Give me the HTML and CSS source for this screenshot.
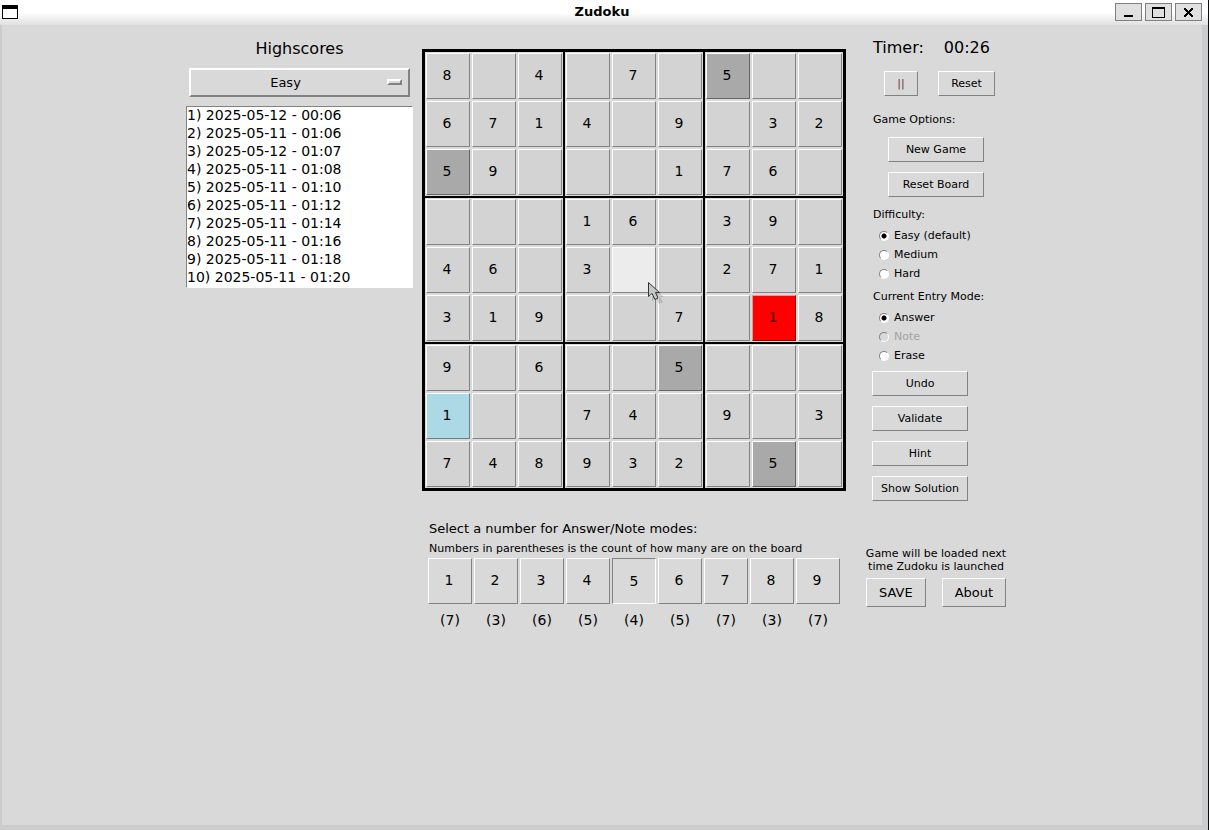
FILE: index.html
```html
<!DOCTYPE html>
<html lang="en">
<head>
<meta charset="utf-8">
<title>Zudoku</title>
<link rel="stylesheet" href="styles.css">
</head>
<body>
<div class="window">
  <header class="titlebar">
    <svg class="app-icon" width="16" height="14" viewBox="0 0 16 14" shape-rendering="crispEdges" aria-hidden="true"><rect width="16" height="14" fill="#000"/><rect x="1" y="4" width="14" height="9" fill="#fff"/></svg>
    <h1 class="title">Zudoku</h1>
    <div class="window-controls">
      <button class="window-btn" type="button" aria-label="Minimize"><svg width="26" height="17" viewBox="0 0 26 17" shape-rendering="crispEdges"><rect x="8" y="11" width="9" height="2"/></svg></button>
      <button class="window-btn" type="button" aria-label="Maximize"><svg width="26" height="17" viewBox="0 0 26 17" shape-rendering="crispEdges"><path d="M6 3h13v11H6zM7 5v8h11V5z" fill-rule="evenodd"/></svg></button>
      <button class="window-btn" type="button" aria-label="Close"><svg width="26" height="17" viewBox="0 0 26 17" shape-rendering="crispEdges"><path d="M8 4h2v1h1v1h1v1h1v-1h1v-1h1v-1h2v2h-1v1h-1v1h-1v1h1v1h1v1h1v2h-2v-1h-1v-1h-1v-1h-1v1h-1v1h-1v1h-2v-2h1v-1h1v-1h1v-1h-1v-1h-1v-1h-1z"/></svg></button>
    </div>
  </header>
  <main class="content">
    <section class="scores">
      <h2 class="heading">Highscores</h2>
      <div class="option-menu">
        <select class="option-select" aria-label="Highscore difficulty"><option>Easy</option><option>Medium</option><option>Hard</option></select>
        <span class="option-mark"></span>
      </div>
      <select class="score-list" size="10" aria-label="Highscores">
        <option>1) 2025-05-12 - 00:06</option>
        <option>2) 2025-05-11 - 01:06</option>
        <option>3) 2025-05-12 - 01:07</option>
        <option>4) 2025-05-11 - 01:08</option>
        <option>5) 2025-05-11 - 01:10</option>
        <option>6) 2025-05-11 - 01:12</option>
        <option>7) 2025-05-11 - 01:14</option>
        <option>8) 2025-05-11 - 01:16</option>
        <option>9) 2025-05-11 - 01:18</option>
        <option>10) 2025-05-11 - 01:20</option>
      </select>
    </section>

    <section class="play">
      <div class="board">
        <div class="box">
          <button class="cell">8</button><button class="cell"></button><button class="cell">4</button>
          <button class="cell">6</button><button class="cell">7</button><button class="cell">1</button>
          <button class="cell match">5</button><button class="cell">9</button><button class="cell"></button>
        </div>
        <div class="box">
          <button class="cell"></button><button class="cell">7</button><button class="cell"></button>
          <button class="cell">4</button><button class="cell"></button><button class="cell">9</button>
          <button class="cell"></button><button class="cell"></button><button class="cell">1</button>
        </div>
        <div class="box">
          <button class="cell match">5</button><button class="cell"></button><button class="cell"></button>
          <button class="cell"></button><button class="cell">3</button><button class="cell">2</button>
          <button class="cell">7</button><button class="cell">6</button><button class="cell"></button>
        </div>
        <div class="box">
          <button class="cell"></button><button class="cell"></button><button class="cell"></button>
          <button class="cell">4</button><button class="cell">6</button><button class="cell"></button>
          <button class="cell">3</button><button class="cell">1</button><button class="cell">9</button>
        </div>
        <div class="box">
          <button class="cell">1</button><button class="cell">6</button><button class="cell"></button>
          <button class="cell">3</button><button class="cell hover"><svg class="pointer" width="18" height="24" viewBox="0 0 18 24" aria-hidden="true"><path d="M5 5v15l4-3 3 6 4-2-3-5h4z" fill="#777" opacity=".3"/><path d="M1.500 1.500v14l3.500-3 3 6 3-1.500-2.500-5.500h4z" fill="#c4c8c8" stroke="#333"/></svg></button><button class="cell"></button>
          <button class="cell"></button><button class="cell"></button><button class="cell">7</button>
        </div>
        <div class="box">
          <button class="cell">3</button><button class="cell">9</button><button class="cell"></button>
          <button class="cell">2</button><button class="cell">7</button><button class="cell">1</button>
          <button class="cell"></button><button class="cell wrong">1</button><button class="cell">8</button>
        </div>
        <div class="box">
          <button class="cell">9</button><button class="cell"></button><button class="cell">6</button>
          <button class="cell hint">1</button><button class="cell"></button><button class="cell"></button>
          <button class="cell">7</button><button class="cell">4</button><button class="cell">8</button>
        </div>
        <div class="box">
          <button class="cell"></button><button class="cell"></button><button class="cell match">5</button>
          <button class="cell">7</button><button class="cell">4</button><button class="cell"></button>
          <button class="cell">9</button><button class="cell">3</button><button class="cell">2</button>
        </div>
        <div class="box">
          <button class="cell"></button><button class="cell"></button><button class="cell"></button>
          <button class="cell">9</button><button class="cell"></button><button class="cell">3</button>
          <button class="cell"></button><button class="cell match">5</button><button class="cell"></button>
        </div>
      </div>

      <div class="picker">
        <p class="picker-title">Select a number for Answer/Note modes:</p>
        <p class="picker-note">Numbers in parentheses is the count of how many are on the board</p>
        <div class="numbers">
          <button class="cell number">1</button><button class="cell number">2</button><button class="cell number">3</button>
          <button class="cell number">4</button><button class="cell number pressed">5</button><button class="cell number">6</button>
          <button class="cell number">7</button><button class="cell number">8</button><button class="cell number">9</button>
          <span class="count">(7)</span><span class="count">(3)</span><span class="count">(6)</span>
          <span class="count">(5)</span><span class="count">(4)</span><span class="count">(5)</span>
          <span class="count">(7)</span><span class="count">(3)</span><span class="count">(7)</span>
        </div>
      </div>
    </section>

    <aside class="side">
      <div class="panel">
        <div class="timer"><span>Timer:</span><span>00:26</span></div>
        <div class="timer-actions">
          <button class="btn pause" aria-label="Pause">||</button>
          <button class="btn reset">Reset</button>
        </div>
        <h3 class="label">Game Options:</h3>
        <div class="actions options">
          <button class="btn wide">New Game</button>
          <button class="btn wide">Reset Board</button>
        </div>
        <fieldset class="group">
          <legend class="label">Difficulty:</legend>
          <label class="choice"><input class="radio" type="radio" name="difficulty" checked>Easy (default)</label>
          <label class="choice"><input class="radio" type="radio" name="difficulty">Medium</label>
          <label class="choice"><input class="radio" type="radio" name="difficulty">Hard</label>
        </fieldset>
        <fieldset class="group">
          <legend class="label">Current Entry Mode:</legend>
          <label class="choice"><input class="radio" type="radio" name="mode" checked>Answer</label>
          <label class="choice disabled"><input class="radio" type="radio" name="mode" disabled>Note</label>
          <label class="choice"><input class="radio" type="radio" name="mode">Erase</label>
        </fieldset>
        <div class="actions">
          <button class="btn wide">Undo</button>
          <button class="btn wide">Validate</button>
          <button class="btn wide">Hint</button>
          <button class="btn wide">Show Solution</button>
        </div>
      </div>
      <div class="save">
        <p class="save-note">Game will be loaded next<br>time Zudoku is launched</p>
        <div class="save-actions">
          <button class="btn large">SAVE</button>
          <button class="btn large">About</button>
        </div>
      </div>
    </aside>
  </main>
</div>
</body>
</html>
```

FILE: styles.css
```css
* { box-sizing: border-box; }

body {
  margin: 0;
  background: #d9d9d9;
  color: #000;
  font: 13px/18px "DejaVu Sans", sans-serif;
}

h1, h2, h3, p { margin: 0; font-weight: normal; }

button, select {
  margin: 0;
  padding: 0;
  border-radius: 0;
  color: inherit;
  font: inherit;
}

.window {
  display: flex;
  flex-direction: column;
  min-height: 100vh;
  border-right: 1px solid #0a0c10;
}

/* Title bar */
.titlebar {
  display: grid;
  grid-template-columns: 1fr auto 1fr;
  align-items: center;
  height: 25px;
  padding: 0 6px 1px 2px;
  background: linear-gradient(#fff 50%, #e0e0e0);
}
.title { font-size: 13px; font-weight: bold; line-height: 20px; }
.window-controls { display: flex; justify-content: flex-end; gap: 3px; }
.window-btn {
  display: flex;
  align-items: center;
  justify-content: center;
  width: 27px;
  height: 18px;
  border: 1px solid #808080;
  background: #e0e0e0;
}
.window-btn svg { flex: none; }

/* Content */
.content {
  flex: 1;
  display: flex;
  justify-content: center;
  align-items: flex-start;
  padding-top: 14px;
  border: solid #ccc;
  border-width: 0 6px 5px 2px;
}

.scores {
  display: flex;
  flex-direction: column;
  width: 227px;
  margin-right: 9px;
}
.heading { font-size: 16px; line-height: 20px; text-align: center; }
.option-menu { position: relative; margin: 9px 3px; }
.option-select {
  display: block;
  width: 100%;
  height: 29px;
  padding-right: 28px;
  appearance: none;
  border: 2px solid;
  border-color: #fff #828282 #828282 #fff;
  background: #d9d9d9;
  text-align: center;
  text-align-last: center;
}
.option-mark {
  position: absolute;
  top: 11px;
  right: 8px;
  width: 15px;
  height: 6px;
  border: 2px solid;
  border-color: #fff #828282 #828282 #fff;
  background: #d9d9d9;
  pointer-events: none;
}
.score-list {
  appearance: none;
  height: 182px;
  overflow: hidden;
  border: 1px solid;
  border-color: #828282 #fff #fff #828282;
  background: #fff;
  font-size: 14px;
}
.score-list option { min-height: 18px; padding: 0; line-height: 18px; }

/* Board */
.play { padding-top: 10px; }
.board {
  display: grid;
  grid-template-columns: repeat(3, auto);
  gap: 2px;
  border: 3px solid #000;
  background: #000;
}
.box {
  display: grid;
  grid-template-columns: repeat(3, auto);
  gap: 2px;
  padding: 1px;
  background: #d9d9d9;
}
.cell {
  position: relative;
  width: 44px;
  height: 46px;
  padding: 0 2px 2px 0;
  border: 1px solid;
  border-color: #fff #828282 #828282 #fff;
  background: #d3d3d3;
  font-size: 14px;
}
.match { border-color: #fff #656565 #656565 #fff; background: #a9a9a9; }
.hover { border-right-color: #888; background: #ececec; }
.hint { border-color: #fff #678288 #678288 #fff; background: #add8e6; }
.wrong { border-color: #ff9090 #990000 #990000 #ff9090; background: #f00; color: #500000; }
.pointer { position: absolute; left: 34px; top: 33px; z-index: 1; }

.picker { padding: 29px 6px 0; }
.picker-title { padding-left: 1px; }
.picker-note { padding-left: 1px; font-size: 11px; line-height: 14px; margin: 4px 0 2px; }
.numbers {
  display: grid;
  grid-template-columns: repeat(9, 44px);
  column-gap: 2px;
  row-gap: 7px;
}
.number { background: #d9d9d9; }
.pressed { padding: 0; border-color: #828282 #fff #fff #828282; }
.count { font-size: 14px; text-align: center; }

/* Side panel */
.side { width: 152px; margin-left: 20px; font-size: 11px; line-height: 14px; }
.panel { padding-left: 6px; }
.timer { display: flex; gap: 20px; padding-left: 1px; font-size: 16px; line-height: 18px; }
.timer-actions { display: flex; gap: 20px; padding: 14px 0 18px 12px; }
.label { padding-left: 1px; font-size: 11px; line-height: 12px; }
.btn {
  height: 25px;
  border: 1px solid;
  border-color: #fff #828282 #828282 #fff;
  background: #d9d9d9;
}
.pause { width: 34px; color: #6b3a2a; }
.reset { width: 57px; }
.wide { width: 96px; }
.actions { display: flex; flex-direction: column; gap: 10px; }
.options { padding: 11px 0 10px 16px; }
.group { margin: 0 0 5px; padding: 6px 0 0 7px; border: 0; }
.group .label { margin-left: -7px; padding-top: 2px; }
.choice { display: flex; align-items: center; gap: 5px; height: 19px; padding-bottom: 1px; }
.radio {
  appearance: none;
  width: 10px;
  height: 10px;
  margin: 0;
  border: 1px solid;
  border-color: #828282 #fff #fff #828282;
  border-radius: 50%;
  background: #fff;
}
.radio:checked { background: radial-gradient(circle, #000 2px, #fff 3px); }
.radio:disabled { background: #d9d9d9; }
.disabled { color: #a3a3a3; }

.save { margin-top: 46px; }
.save-note {
  display: flex;
  justify-content: center;
  width: 140px;
  line-height: 13px;
  text-align: center;
  white-space: nowrap;
}
.save-actions { display: flex; gap: 16px; margin-top: 5px; }
.large { height: 29px; padding: 0 12px; font-size: 13px; }
```
